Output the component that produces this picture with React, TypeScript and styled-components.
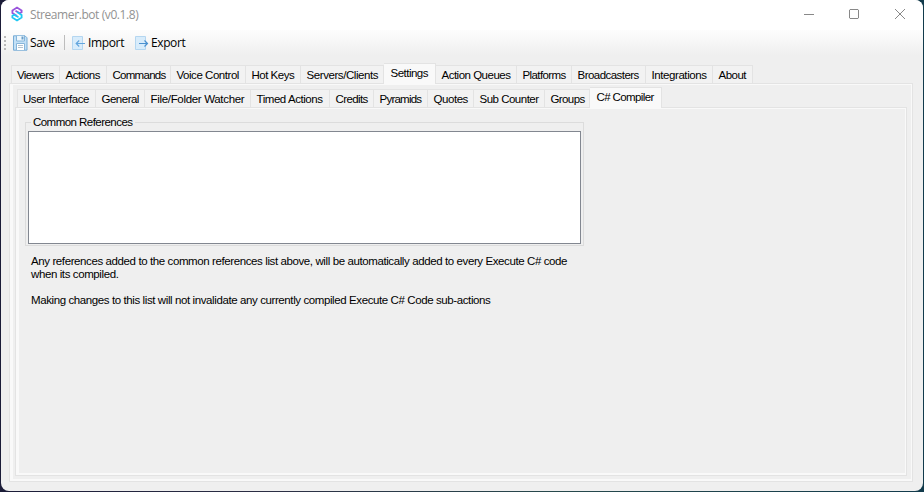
import React from "react";
import styled, { createGlobalStyle } from "styled-components";

const Global = createGlobalStyle`
  * { box-sizing: border-box; }
  html, body { margin: 0; padding: 0; overflow: hidden; }
  body { background: linear-gradient(90deg, #1b1c38 0, #2c2f45 30%, #27494c 60%, #123b4c 100%); }
`;

const Desktop = styled.div`
  width: 924px;
  height: 492px;
  padding: 0 1px 1px;
`;

const Window = styled.main`
  height: 491px;
  display: flex;
  flex-direction: column;
  background: #efefef;
  border-radius: 8px;
  overflow: hidden;
  font: 11.5px/13px "Liberation Sans", Arial, sans-serif;
  color: #000;
  white-space: nowrap;
`;

const TitleBar = styled.header`
  height: 30px;
  flex: none;
  display: flex;
  align-items: center;
  background: #fff;
  padding: 0 0 2px 9px;
`;

const Title = styled.h1`
  flex: 1;
  margin: 1px 0 0 6px;
  font: 400 12px/16px "Open Sans", "Noto Sans", sans-serif;
  letter-spacing: -0.41px;
  color: #929292;
`;

const Controls = styled.div`
  display: flex;
`;

const ControlButton = styled.button`
  width: 46px;
  height: 28px;
  border: 0;
  padding: 0;
  background: none;
  display: grid;
  place-items: center;
`;

const ToolBar = styled.nav`
  height: 25px;
  flex: none;
  display: flex;
  align-items: center;
  background: linear-gradient(#fdfdfd, #efefef);
  padding-left: 3px;
  font: 12px/16px "Open Sans", "Noto Sans", sans-serif;
`;

const Grip = styled.i`
  width: 2px;
  height: 14px;
  margin-right: 7px;
  background: repeating-linear-gradient(#b9b9b9 0 2px, transparent 2px 4px);
`;

const ToolButton = styled.button<{ $w: number; $ls: number }>`
  width: ${(p) => p.$w}px;
  display: flex;
  align-items: center;
  gap: 2px;
  padding: 0;
  border: 0;
  background: none;
  font: inherit;
  color: #000;
  letter-spacing: ${(p) => p.$ls}px;
`;

const Separator = styled.i`
  width: 1px;
  height: 15px;
  background: #bdbdbd;
  margin-right: 7px;
`;

const TabStrip = styled.div`
  display: flex;
  align-items: flex-end;
  height: 21px;
  flex: none;
  padding-left: 2px;
`;

const TabItem = styled.button<{ $w: number; $ls: number; $active?: boolean }>`
  position: relative;
  width: ${(p) => p.$w}px;
  height: ${(p) => (p.$active ? 21 : 19)}px;
  margin-bottom: -1px;
  padding: ${(p) => (p.$active ? "0 0 2px 6.5px" : "2px 0 0 5.5px")};
  border: 1px solid #e3e3e3;
  border-left-width: 0;
  border-bottom: ${(p) => (p.$active ? "0" : "1px solid #e3e3e3")};
  background: ${(p) => (p.$active ? "#f9f9f9" : "#f2f2f2")};
  display: flex;
  align-items: center;
  font: inherit;
  color: #000;
  letter-spacing: ${(p) => p.$ls}px;
  &:first-child { border-left-width: 1px; padding-left: 5px; }
`;

const TabPage = styled.section`
  flex: 1;
  display: flex;
  flex-direction: column;
  border: 1px solid #e3e3e3;
  box-shadow: inset 3px 0 #f9f9f9, inset 0 -2px #f9f9f9, inset -1px 0 #f9f9f9, inset 0 1px #f9f9f9;
`;

const Body = styled.div`
  flex: 1;
  display: flex;
  flex-direction: column;
  padding: 7px 10px 9px 8px;
`;

const InnerBody = styled.div`
  flex: 1;
  display: flex;
  flex-direction: column;
  padding: 2px 5px 5px 5px;
`;

const Group = styled.fieldset`
  width: 559px;
  height: 130px;
  margin: 8px 0 0 9px;
  padding: 2px 2px 1px;
  border: 1px solid #dcdcdc;
  min-width: 0;
`;

const Legend = styled.legend`
  height: 13px;
  margin-left: 3px;
  padding: 0 3px 0 2px;
  letter-spacing: -0.54px;
`;

const ListBox = styled.div`
  height: 113px;
  border: 1px solid #828790;
  background: #fff;
`;

const Note = styled.p<{ $top: number; $ls: number }>`
  margin: ${(p) => p.$top}px 0 0 15px;
  white-space: pre-line;
  letter-spacing: ${(p) => p.$ls}px;
`;

type TabDef = [label: string, width: number, spacing: number];
const mainTabs: TabDef[] = [
  ["Viewers", 49, -0.59], ["Actions", 47, -0.44], ["Commands", 64, -0.72], ["Voice Control", 75, -0.46],
  ["Hot Keys", 55, -0.5], ["Servers/Clients", 83, -0.42], ["Settings", 52, -0.52], ["Action Queues", 81, -0.5],
  ["Platforms", 55, -0.6], ["Broadcasters", 74, -0.54], ["Integrations", 67, -0.42], ["About", 40, -0.5],
];
const settingsTabs: TabDef[] = [
  ["User Interface", 79, -0.45], ["General", 49, -0.5], ["File/Folder Watcher", 106, -0.32],
  ["Timed Actions", 79, -0.44], ["Credits", 44, -0.6], ["Pyramids", 54, -0.76], ["Quotes", 46, -0.45],
  ["Sub Counter", 71, -0.5], ["Groups", 45, -0.6], ["C# Compiler", 72, -0.6],
];

function Tabs({ items, active }: { items: TabDef[]; active: string }) {
  return (
    <TabStrip>
      {items.map(([label, w, ls]) => (
        <TabItem key={label} $w={w} $ls={ls} $active={label === active}>{label}</TabItem>
      ))}
    </TabStrip>
  );
}

const Logo = () => (
  <svg width="14" height="16" viewBox="0 0 14 16" fill="none" strokeWidth="1.8">
    <path d="M7 10 2.4 7.1V4.4L7 1.6l4.6 2.8v1.8L9.8 7.3 5.5 4.8" stroke="#9a55dc" />
    <path d="M7 6 11.6 8.9v2.7L7 14.4l-4.6-2.8V9.8l1.8-1.1 4.3 2.5" stroke="#20c8f3" />
  </svg>
);

const SaveIcon = () => (
  <svg width="15" height="16" viewBox="0 0 15 16">
    <path d="M.5.8h11.5l2 2v12.4H.5z" fill="#c3e0f6" stroke="#77acd6" />
    <path d="M3.5 1v5h8V1" fill="#eef7fd" stroke="#86b5da" />
    <path d="M8.5 1.5h2v3h-2z" fill="#6b9fca" />
    <path d="M3.5 15V8.5h8V15" fill="#fff" stroke="#86b5da" />
    <path d="M5 10.5h5M5 12.5h5" stroke="#b3c3d0" />
  </svg>
);

const PortIcon = ({ out }: { out?: boolean }) => (
  <svg width="14" height="16" viewBox="0 0 14 16" fill="none">
    <path d="M.5 1.5h10v13H.5z" fill="#d8ecfb" stroke="#b4d6f0" />
    {out ? (
      <path d="M4 8.5h8.5M9.5 5.5l3 3-3 3" stroke="#4a90cf" strokeWidth="1.2" />
    ) : (
      <path d="M13 8.5H4.2M7.2 5.5l-3 3 3 3" stroke="#64a6dd" strokeWidth="1.2" />
    )}
  </svg>
);

const ControlIcon = ({ d }: { d: string }) => (
  <svg width="12" height="12" viewBox="0 0 12 12" fill="none" stroke="#888">
    <path d={d} />
  </svg>
);

export default function App() {
  return (
    <>
      <Global />
      <Desktop>
        <Window>
          <TitleBar>
            <Logo />
            <Title>Streamer.bot (v0.1.8)</Title>
            <Controls>
              <ControlButton aria-label="Minimize"><ControlIcon d="M2 6.5h10" /></ControlButton>
              <ControlButton aria-label="Maximize"><ControlIcon d="M2 1.5h8l.5.5v8l-.5.5H2l-.5-.5V2z" /></ControlButton>
              <ControlButton aria-label="Close"><ControlIcon d="m1 1 10 10M11 1 1 11" /></ControlButton>
            </Controls>
          </TitleBar>
          <ToolBar>
            <Grip />
            <ToolButton $w={51} $ls={-0.35}><SaveIcon />Save</ToolButton>
            <Separator />
            <ToolButton $w={63} $ls={-0.35}><PortIcon />Import</ToolButton>
            <ToolButton $w={54} $ls={-0.4}><PortIcon out />Export</ToolButton>
          </ToolBar>
          <Body>
            <Tabs items={mainTabs} active="Settings" />
            <TabPage>
              <InnerBody>
                <Tabs items={settingsTabs} active="C# Compiler" />
                <TabPage>
                  <Group>
                    <Legend>Common References</Legend>
                    <ListBox />
                  </Group>
                  <Note $top={9} $ls={-0.397}>{"Any references added to the common references list above, will be automatically added to every Execute C# code\nwhen its compiled."}</Note>
                  <Note $top={13} $ls={-0.4}>Making changes to this list will not invalidate any currently compiled Execute C# Code sub-actions</Note>
                </TabPage>
              </InnerBody>
            </TabPage>
          </Body>
        </Window>
      </Desktop>
    </>
  );
}
